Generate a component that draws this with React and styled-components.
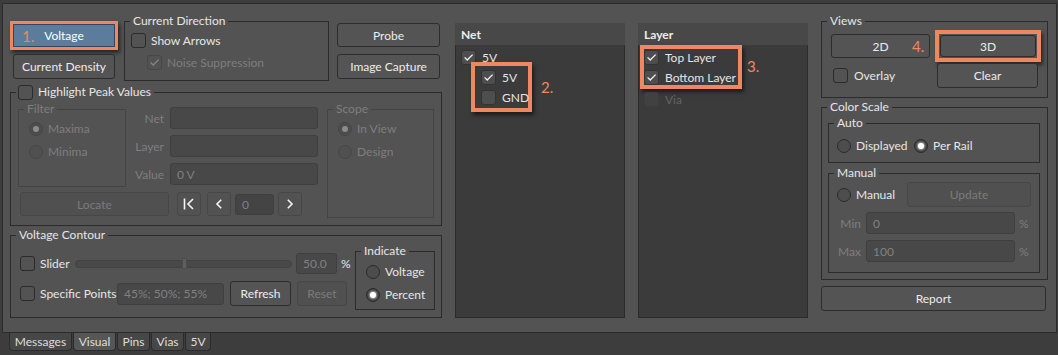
import React from 'react';
import styled, { createGlobalStyle } from 'styled-components';

const ORANGE = '#ef8760';
const DARK = '#2b2b2b';
const TEXT = '#e6e6e6';
const DIM = '#7e7e7e';

const Global = createGlobalStyle`
  * { box-sizing: border-box; }
  html, body { margin: 0; padding: 0; background: #3d3d3d; }
  body { font-family: Lato, "Noto Sans", sans-serif; font-size: 12px; color: ${TEXT}; }
`;

const Page = styled.div`
  width: 1058px;
  height: 355px;
  overflow: hidden;
  padding-top: 3px;
  display: flex;
  flex-direction: column;
`;

const Panel = styled.div`
  margin: 0 1px 0 2px;
  height: 330px;
  flex: none;
  background: #535353;
  border: 1px solid ${DARK};
  padding: 9px 0 0 7px;
  display: flex;
  align-items: flex-start;
  column-gap: 13px;
`;

const Column = styled.div`
  flex: none;
  width: ${p => p.$w}px;
  display: flex;
  flex-direction: column;
`;

const Row = styled.div`
  display: flex;
  align-items: ${p => p.$align || 'center'};
  margin-top: ${p => p.$mt ?? 0}px;
  margin-left: ${p => p.$ml ?? 0}px;
  height: ${p => (p.$h ? p.$h + 'px' : 'auto')};
`;

const Stack = styled.div`
  display: flex;
  flex-direction: column;
  gap: ${p => p.$gap ?? 0}px;
  margin-top: ${p => p.$mt ?? 0}px;
  margin-left: ${p => p.$ml ?? 0}px;
  width: ${p => (p.$w ? p.$w + 'px' : 'auto')};
  flex: none;
`;

const Group = styled.fieldset`
  margin: ${p => p.$mt ?? 0}px 0 0 ${p => p.$ml ?? 0}px;
  padding: 0;
  min-width: 0;
  flex: none;
  width: ${p => p.$w}px;
  height: ${p => p.$h}px;
  border: 1px solid ${p => (p.$dim ? '#444444' : DARK)};
`;

const Legend = styled.legend`
  margin-left: 5px;
  padding: 0 3px 0 ${p => p.$pl ?? 3}px;
  height: 16px;
  line-height: 16px;
  font-size: 12px;
  color: ${p => (p.$dim ? DIM : TEXT)};
  display: flex;
  align-items: center;
  gap: 5px;
`;

const GroupBody = styled.div`
  display: flex;
  flex-direction: ${p => p.$dir || 'column'};
  align-items: flex-start;
  padding: ${p => p.$pad || '0'};
  gap: ${p => p.$gap ?? 0}px;
`;

const Btn = styled.button`
  flex: none;
  position: relative;
  width: ${p => p.$w}px;
  height: ${p => p.$h ?? 25}px;
  margin: 0 0 0 ${p => p.$ml ?? 0}px;
  padding: 0;
  font-family: inherit;
  font-size: 12px;
  color: ${p => (p.$dis ? '#7b7b7b' : '#ececec')};
  background: ${p => (p.$dis ? '#505050' : '#545454')};
  border: 1px solid ${p => (p.$dis ? '#474747' : '#2d2d2d')};
  border-radius: 3px;
  display: flex;
  align-items: center;
  justify-content: center;
`;

const Field = styled.div`
  flex: none;
  width: ${p => p.$w}px;
  height: ${p => p.$h ?? 22}px;
  margin-left: ${p => p.$ml ?? 0}px;
  background: ${p => p.$bg || '#484848'};
  border: 1px solid #3f3f3f;
  border-radius: 3px;
  color: #808080;
  padding-left: 6px;
  display: flex;
  align-items: center;
  font-size: 12px;
`;

const FieldLabel = styled.span`
  flex: none;
  width: ${p => p.$w}px;
  margin-right: ${p => p.$gap ?? 6}px;
  text-align: right;
  color: ${DIM};
`;

const Unit = styled.span`
  margin-left: 4px;
  color: ${p => (p.$dis ? DIM : TEXT)};
`;

const CheckRow = styled.div`
  display: flex;
  align-items: center;
  height: 15px;
  gap: ${p => p.$gap ?? 5}px;
  margin-left: ${p => p.$ml ?? 0}px;
  color: ${p => (p.$dis ? (p.$faint ? '#646464' : DIM) : TEXT)};
  white-space: nowrap;
  flex: none;
`;

const CBox = styled.span`
  flex: none;
  width: 15px;
  height: 15px;
  border-radius: 3px;
  border: 1px solid ${p => p.$border || DARK};
  background: ${p => p.$bg || '#535353'};
  display: flex;
  align-items: center;
  justify-content: center;
`;

const CLabel = styled.span`
  width: ${p => (p.$w ? p.$w + 'px' : 'auto')};
  flex: none;
`;

const Tick = ({ color }) => (
  <svg width="11" height="9" viewBox="0 0 11 9">
    <path d="M1.6 4.4 L4.2 7 L9.6 1.6" fill="none" stroke={color} strokeWidth="1.3" />
  </svg>
);

function Check({ on, dis, faint, label, labelW, bg, border, gap, ml }) {
  return (
    <CheckRow $dis={dis} $faint={faint} $gap={gap} $ml={ml}>
      <CBox $bg={bg} $border={border || (dis ? '#474747' : DARK)}>
        {on && <Tick color={dis ? '#858585' : '#f2f2f2'} />}
      </CBox>
      {label && <CLabel $w={labelW}>{label}</CLabel>}
    </CheckRow>
  );
}

const RCircle = styled.span`
  flex: none;
  width: 14px;
  height: 14px;
  border-radius: 50%;
  border: 1px solid ${p => (p.$dis ? '#474747' : DARK)};
  background: ${p => (p.$on ? (p.$dis ? '#4c4c4c' : '#404040') : p.$dis ? '#505050' : '#4d4d4d')};
  display: flex;
  align-items: center;
  justify-content: center;
  &::after {
    content: '';
    display: ${p => (p.$on ? 'block' : 'none')};
    width: 6px;
    height: 6px;
    border-radius: 50%;
    background: ${p => (p.$dis ? '#8c8c8c' : '#ffffff')};
    box-shadow: ${p => (p.$dis ? 'none' : '0 0 2px 1px rgba(255,255,255,0.55)')};
  }
`;

function Radio({ on, dis, label, w }) {
  return (
    <CheckRow $dis={dis}>
      <RCircle $on={on} $dis={dis} />
      <CLabel $w={w}>{label}</CLabel>
    </CheckRow>
  );
}

const Mark = styled.div`
  flex: none;
  border: ${p => p.$bw ?? 4}px solid ${ORANGE};
  box-shadow: 2px 3px 4px rgba(0, 0, 0, 0.55);
  width: ${p => p.$w}px;
  margin: ${p => p.$m || '0'};
  padding: ${p => p.$pad || '0'};
  display: flex;
  flex-direction: column;
  gap: ${p => p.$gap ?? 0}px;
`;

const Num = styled.span`
  color: ${ORANGE};
  font-size: 15px;
  margin-left: ${p => p.$ml ?? 0}px;
  flex: none;
`;

const OverNum = styled(Num)`
  position: absolute;
  left: ${p => p.$left}px;
  top: 50%;
  transform: translateY(-52%);
  margin: 0;
`;

const VoltageBtn = styled(Btn)`
  background: #5b7c9d;
  border-color: #33475a;
  border-radius: 1px;
  color: #ffffff;
`;

const Track = styled.div`
  flex: none;
  width: 217px;
  height: 8px;
  border-radius: 4px;
  background: #484848;
  border: 1px solid #434343;
  display: flex;
  align-items: center;
  padding-left: 106px;
`;

const Thumb = styled.span`
  flex: none;
  width: 5px;
  height: 11px;
  border-radius: 1px;
  background: #5e5e5e;
  border: 1px solid #4b4b4b;
`;

const NavBtn = styled(Btn)`
  border-color: #474747;
  background: #525252;
`;

const ListPanel = styled.div`
  flex: none;
  width: 170px;
  height: 295px;
  margin-top: 10px;
  display: flex;
  flex-direction: column;
`;

const ListHead = styled.div`
  height: 22px;
  flex: none;
  background: #484848;
  font-weight: 700;
  color: #ededed;
  padding-left: 6px;
  display: flex;
  align-items: center;
`;

const ListBody = styled.div`
  flex: 1;
  background: #3b3b3b;
  border: 1px solid ${DARK};
  border-top-color: #3b3b3b;
  padding: 4px 0 0 5px;
  display: flex;
  flex-direction: column;
  gap: 5px;
`;

const TreeBox = '#4e4e4e';

const TabStrip = styled.div`
  display: flex;
  padding-left: 9px;
  gap: 1px;
`;

const Tab = styled.div`
  flex: none;
  width: ${p => p.$w}px;
  height: 18px;
  display: flex;
  align-items: center;
  justify-content: center;
  background: ${p => (p.$active ? '#565656' : '#474747')};
  border: 1px solid ${DARK};
  border-top: none;
  border-radius: 0 0 4px 4px;
  color: #dedede;
`;

const FirstIcon = () => (
  <svg width="12" height="12" viewBox="0 0 12 12">
    <path d="M1.5 0.5 V11.5 M10 1 L5 6 L10 11" fill="none" stroke="#f4f4f4" strokeWidth="1.6" />
  </svg>
);
const PrevIcon = () => (
  <svg width="12" height="12" viewBox="0 0 12 12">
    <path d="M8.2 1.8 L4 6 L8.2 10.2" fill="none" stroke="#f4f4f4" strokeWidth="1.6" />
  </svg>
);
const NextIcon = () => (
  <svg width="12" height="12" viewBox="0 0 12 12">
    <path d="M3.8 1.8 L8 6 L3.8 10.2" fill="none" stroke="#f4f4f4" strokeWidth="1.6" />
  </svg>
);

const tabs = [
  { label: 'Messages', w: 63 },
  { label: 'Visual', w: 43, active: true },
  { label: 'Pins', w: 33 },
  { label: 'Vias', w: 33 },
  { label: '5V', w: 26 },
];

export default function App() {
  return (
    <>
      <Global />
      <Page>
        <Panel>
          <Column $w={432}>
            <Row $align="flex-start" $h={68}>
              <Stack $w={108} $mt={8} $gap={4}>
                <Mark $bw={3} $w={108}>
                  <VoltageBtn $w={102} $h={23}>
                    <OverNum $left={8}>1.</OverNum>
                    Voltage
                  </VoltageBtn>
                </Mark>
                <Btn $w={102} $ml={3}>Current Density</Btn>
              </Stack>
              <Group $w={205} $h={68} $ml={6}>
                <Legend>Current Direction</Legend>
                <GroupBody $pad="4px 0 0 6px" $gap={7}>
                  <Check label="Show Arrows" />
                  <Check on dis label="Noise Suppression" ml={16} />
                </GroupBody>
              </Group>
              <Stack $w={103} $ml={8} $mt={10} $gap={7}>
                <Btn $w={103} $h={24}>Probe</Btn>
                <Btn $w={103}>Image Capture</Btn>
              </Stack>
            </Row>

            <Group $w={432} $h={142} $mt={3}>
              <Legend $pl={2}>
                <CBox />
                Highlight Peak Values
              </Legend>
              <GroupBody $dir="row" $pad="1px 0 0 7px">
                <Stack>
                  <Row $align="flex-start">
                    <Group $w={108} $h={86} $dim>
                      <Legend $dim>Filter</Legend>
                      <GroupBody $pad="4px 0 0 10px" $gap={8}>
                        <Radio on dis label="Maxima" />
                        <Radio dis label="Minima" />
                      </GroupBody>
                    </Group>
                    <Stack $mt={6} $ml={4} $gap={6}>
                      <Row>
                        <FieldLabel $w={34}>Net</FieldLabel>
                        <Field $w={148} />
                      </Row>
                      <Row>
                        <FieldLabel $w={34}>Layer</FieldLabel>
                        <Field $w={148} />
                      </Row>
                      <Row>
                        <FieldLabel $w={34}>Value</FieldLabel>
                        <Field $w={148}>0 V</Field>
                      </Row>
                    </Stack>
                  </Row>
                  <Row $mt={5} $ml={2}>
                    <Btn $dis $w={149} $h={24}>Locate</Btn>
                    <NavBtn $w={24} $h={24} $ml={8}><FirstIcon /></NavBtn>
                    <NavBtn $w={24} $h={24} $ml={6}><PrevIcon /></NavBtn>
                    <Field $w={39} $h={21} $ml={4} $bg="#444444">0</Field>
                    <NavBtn $w={24} $h={24} $ml={4}><NextIcon /></NavBtn>
                  </Row>
                </Stack>
                <Group $w={107} $h={117} $ml={9} $dim>
                  <Legend $dim>Scope</Legend>
                  <GroupBody $pad="4px 0 0 10px" $gap={8}>
                    <Radio on dis label="In View" />
                    <Radio dis label="Design" />
                  </GroupBody>
                </Group>
              </GroupBody>
            </Group>

            <Group $w={432} $h={91} $mt={1}>
              <Legend>Voltage Contour</Legend>
              <GroupBody $dir="row" $pad="0 0 0 9px">
                <Stack $w={327} $mt={10} $gap={7}>
                  <Row $h={21}>
                    <Check label="Slider" labelW={35} />
                    <Track><Thumb /></Track>
                    <Field $w={41} $h={21} $ml={4}>50.0</Field>
                    <Unit>%</Unit>
                  </Row>
                  <Row $h={25}>
                    <Check label="Specific Points" labelW={77} />
                    <Field $w={107}>45%; 50%; 55%</Field>
                    <Btn $w={61} $ml={6}>Refresh</Btn>
                    <Btn $dis $w={50} $ml={6}>Reset</Btn>
                  </Row>
                </Stack>
                <Group $w={80} $h={67} $ml={8}>
                  <Legend>Indicate</Legend>
                  <GroupBody $pad="5px 0 0 10px" $gap={8}>
                    <Radio label="Voltage" />
                    <Radio on label="Percent" />
                  </GroupBody>
                </Group>
              </GroupBody>
            </Group>
          </Column>

          <ListPanel>
            <ListHead>Net</ListHead>
            <ListBody>
              <Check on label="5V" bg={TreeBox} border="#333333" gap={6} />
              <Row $mt={-8} $ml={10}>
                <Mark $w={61} $pad="4px 0 3px 6px" $gap={5}>
                  <Check on label="5V" bg={TreeBox} border="#333333" gap={6} />
                  <Check label="GND" bg={TreeBox} border="#333333" gap={6} />
                </Mark>
                <Num $ml={9}>2.</Num>
              </Row>
            </ListBody>
          </ListPanel>

          <ListPanel>
            <ListHead>Layer</ListHead>
            <ListBody>
              <Row $mt={-5} $ml={-4}>
                <Mark $w={102} $pad="1px 0 0 0" $gap={5} $m="0 0 -2px 0">
                  <Check on label="Top Layer" bg={TreeBox} border="#333333" gap={6} />
                  <Check on label="Bottom Layer" bg={TreeBox} border="#333333" gap={6} />
                </Mark>
                <Num $ml={5}>3.</Num>
              </Row>
              <Check dis faint label="Via" bg="#414141" border="#3d3d3d" gap={6} />
            </ListBody>
          </ListPanel>

          <Column $w={227}>
            <Group $w={227} $h={85}>
              <Legend>Views</Legend>
              <GroupBody $pad="1px 0 0 9px" $gap={1}>
                <Row>
                  <Btn $w={99} $h={24}>
                    2D
                    <OverNum $left={80}>4.</OverNum>
                  </Btn>
                  <Mark $w={106} $pad="1px" $m="0 0 0 5px">
                    <Btn $w={96} $h={22}>3D</Btn>
                  </Mark>
                </Row>
                <Row>
                  <CheckRow $gap={6} $ml={2}>
                    <CBox />
                    <CLabel $w={81}>Overlay</CLabel>
                  </CheckRow>
                  <Btn $w={101} $ml={2}>Clear</Btn>
                </Row>
              </GroupBody>
            </Group>

            <Group $w={227} $h={181} $mt={1}>
              <Legend>Color Scale</Legend>
              <GroupBody $pad="0 7px 0 6px" $gap={2}>
                <Group $w={212} $h={48}>
                  <Legend>Auto</Legend>
                  <GroupBody $dir="row" $pad="7px 0 0 8px">
                    <Radio label="Displayed" w={58} />
                    <Radio on label="Per Rail" />
                  </GroupBody>
                </Group>
                <Group $w={212} $h={108}>
                  <Legend>Manual</Legend>
                  <GroupBody $pad="1px 8px 0 8px">
                    <Row $h={25}>
                      <Radio label="Manual" w={51} />
                      <Btn $dis $w={124} $ml={0}>Update</Btn>
                    </Row>
                    <Row $mt={5}>
                      <FieldLabel $w={24} $gap={5}>Min</FieldLabel>
                      <Field $w={149}>0</Field>
                      <Unit $dis>%</Unit>
                    </Row>
                    <Row $mt={6}>
                      <FieldLabel $w={24} $gap={5}>Max</FieldLabel>
                      <Field $w={149}>100</Field>
                      <Unit $dis>%</Unit>
                    </Row>
                  </GroupBody>
                </Group>
              </GroupBody>
            </Group>

            <Row $mt={6}>
              <Btn $w={225}>Report</Btn>
            </Row>
          </Column>
        </Panel>
        <TabStrip>
          {tabs.map(t => (
            <Tab key={t.label} $w={t.w} $active={t.active}>{t.label}</Tab>
          ))}
        </TabStrip>
      </Page>
    </>
  );
}
